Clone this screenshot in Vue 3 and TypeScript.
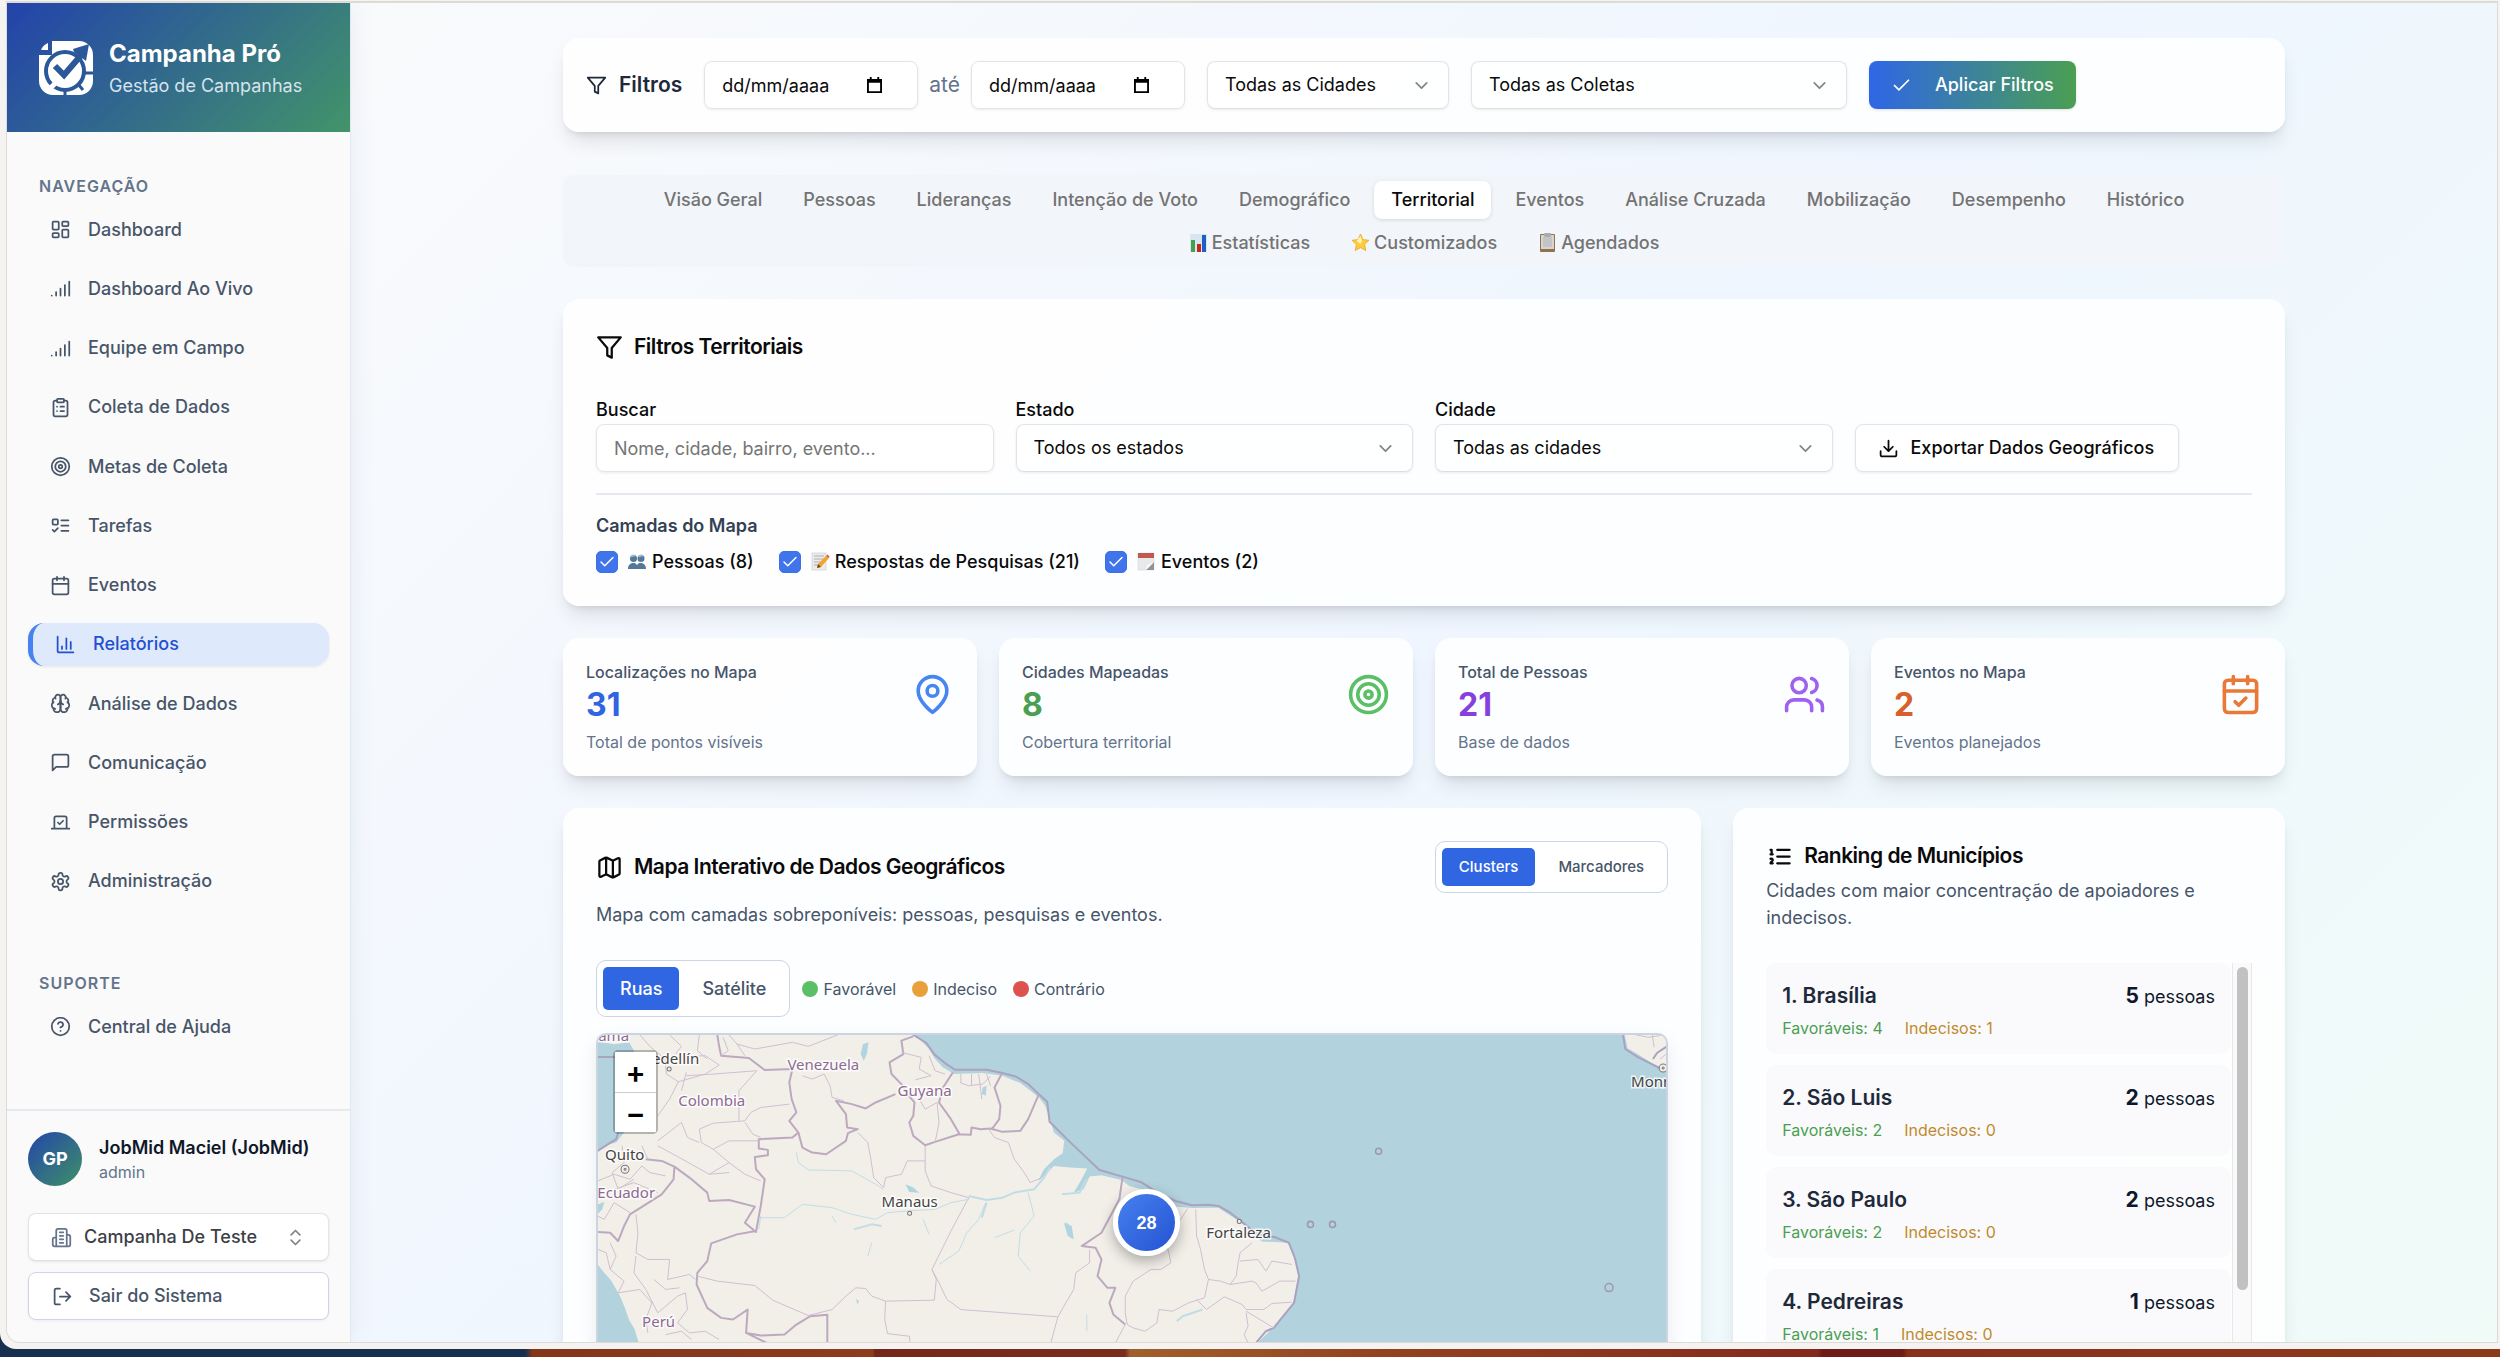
<script setup lang="ts">
import { ref } from 'vue'

const icons: Record<string, string> = {
  dashboard: '<rect x="3" y="3" width="7" height="9" rx="1"/><rect x="14" y="3" width="7" height="5" rx="1"/><rect x="14" y="12" width="7" height="9" rx="1"/><rect x="3" y="16" width="7" height="5" rx="1"/>',
  signal: '<path d="M2 20h.01M7 20v-4M12 20v-8M17 20V8M22 4v16"/>',
  clipboard: '<rect x="8" y="2" width="8" height="4" rx="1"/><path d="M16 4h2a2 2 0 0 1 2 2v14a2 2 0 0 1-2 2H6a2 2 0 0 1-2-2V6a2 2 0 0 1 2-2h2M12 11h4M12 16h4M8 11h.01M8 16h.01"/>',
  target: '<circle cx="12" cy="12" r="10"/><circle cx="12" cy="12" r="6"/><circle cx="12" cy="12" r="2"/>',
  todo: '<rect x="3" y="5" width="6" height="6" rx="1"/><path d="m3 17 2 2 4-4M13 6h8M13 12h8M13 18h8"/>',
  calendar: '<path d="M8 2v4M16 2v4M3 10h18"/><rect x="3" y="4" width="18" height="18" rx="2"/>',
  chart: '<path d="M3 3v16a2 2 0 0 0 2 2h16M18 17V9M13 17V5M8 17v-3"/>',
  brain: '<path d="M12 5a3 3 0 1 0-5.997.125 4 4 0 0 0-2.526 5.77 4 4 0 0 0 .556 6.588A4 4 0 1 0 12 18Z"/><path d="M12 5a3 3 0 1 1 5.997.125 4 4 0 0 1 2.526 5.77 4 4 0 0 1-.556 6.588A4 4 0 1 1 12 18Z"/><path d="M15 13a4.5 4.5 0 0 1-3-4 4.5 4.5 0 0 1-3 4M17.599 6.5a3 3 0 0 0 .399-1.375M6.003 5.125A3 3 0 0 0 6.401 6.5M3.477 10.896a4 4 0 0 1 .585-.396M19.938 10.5a4 4 0 0 1 .585.396M6 18a4 4 0 0 1-1.967-.516M19.967 17.484A4 4 0 0 1 18 18"/>',
  message: '<path d="M21 15a2 2 0 0 1-2 2H7l-4 4V5a2 2 0 0 1 2-2h14a2 2 0 0 1 2 2z"/>',
  vote: '<path d="m9 12 2 2 4-4M5 7c0-1.1.9-2 2-2h10a2 2 0 0 1 2 2v12H5V7ZM22 19H2"/>',
  settings: '<path d="M12.22 2h-.44a2 2 0 0 0-2 2v.18a2 2 0 0 1-1 1.73l-.43.25a2 2 0 0 1-2 0l-.15-.08a2 2 0 0 0-2.73.73l-.22.38a2 2 0 0 0 .73 2.73l.15.1a2 2 0 0 1 1 1.72v.51a2 2 0 0 1-1 1.74l-.15.09a2 2 0 0 0-.73 2.73l.22.38a2 2 0 0 0 2.73.73l.15-.08a2 2 0 0 1 2 0l.43.25a2 2 0 0 1 1 1.73V20a2 2 0 0 0 2 2h.44a2 2 0 0 0 2-2v-.18a2 2 0 0 1 1-1.73l.43-.25a2 2 0 0 1 2 0l.15.08a2 2 0 0 0 2.73-.73l.22-.39a2 2 0 0 0-.73-2.73l-.15-.08a2 2 0 0 1-1-1.74v-.5a2 2 0 0 1 1-1.74l.15-.09a2 2 0 0 0 .73-2.73l-.22-.38a2 2 0 0 0-2.73-.73l-.15.08a2 2 0 0 1-2 0l-.43-.25a2 2 0 0 1-1-1.73V4a2 2 0 0 0-2-2z"/><circle cx="12" cy="12" r="3"/>',
  help: '<circle cx="12" cy="12" r="10"/><path d="M9.09 9a3 3 0 0 1 5.83 1c0 2-3 3-3 3M12 17h.01"/>',
  building: '<path d="M6 22V4a2 2 0 0 1 2-2h8a2 2 0 0 1 2 2v18ZM6 12H4a2 2 0 0 0-2 2v6a2 2 0 0 0 2 2h2M18 9h2a2 2 0 0 1 2 2v9a2 2 0 0 1-2 2h-2M10 6h4M10 10h4M10 14h4M10 18h4"/>',
  updown: '<path d="m7 15 5 5 5-5M7 9l5-5 5 5"/>',
  logout: '<path d="M9 21H5a2 2 0 0 1-2-2V5a2 2 0 0 1 2-2h4M16 17l5-5-5-5M21 12H9"/>',
  filter: '<polygon points="22 3 2 3 10 12.46 10 19 14 21 14 12.46"/>',
  down: '<path d="m6 9 6 6 6-6"/>',
  check: '<path d="M20 6 9 17l-5-5"/>',
  download: '<path d="M21 15v4a2 2 0 0 1-2 2H5a2 2 0 0 1-2-2v-4M7 10l5 5 5-5M12 15V3"/>',
  pin: '<path d="M20 10c0 6-8 12-8 12s-8-6-8-12a8 8 0 0 1 16 0Z"/><circle cx="12" cy="10" r="3"/>',
  users: '<path d="M16 21v-2a4 4 0 0 0-4-4H6a4 4 0 0 0-4 4v2M22 21v-2a4 4 0 0 0-3-3.87M16 3.13a4 4 0 0 1 0 7.75"/><circle cx="9" cy="7" r="4"/>',
  calendarCheck: '<path d="M8 2v4M16 2v4M3 10h18M9 16l2 2 4-4"/><rect x="3" y="4" width="18" height="18" rx="2"/>',
  map: '<path d="M14.106 5.553a2 2 0 0 0 1.788 0l3.659-1.83A1 1 0 0 1 21 4.619v12.764a1 1 0 0 1-.553.894l-4.553 2.277a2 2 0 0 1-1.788 0l-4.212-2.106a2 2 0 0 0-1.788 0l-3.659 1.83A1 1 0 0 1 3 19.381V6.618a1 1 0 0 1 .553-.894l4.553-2.277a2 2 0 0 1 1.788 0zM15 5.764v15M9 3.236v15"/>',
  ordered: '<path d="M10 6h11M10 12h11M10 18h11M4 6h1v4M4 10h2M6 18H4c0-1 2-2 2-3s-1-1.5-2-1"/>',
}

const emojis: Record<string, string> = {
  bars: '<rect x="1" y="1" width="17" height="18" fill="#d9e6f2"/><rect x="2" y="7" width="4" height="12" fill="#3fa34d"/><rect x="8" y="11" width="4" height="8" fill="#c4271e"/><rect x="13" y="2" width="4" height="17" fill="#1f5fc4"/>',
  star: '<path d="M9.500 1l2.500 5.600 6 .700-4.400 4.200 1.200 6.100-5.300-3-5.300 3 1.200-6.100L1 7.300l6-.7z" fill="#fccb3e" stroke="#e9a820" stroke-width=".8"/><path d="M9.500 3L11 7.500 9.500 11 5.500 8z" fill="#fff3b5"/>',
  clip: '<rect x="2" y="1" width="15" height="18" rx="1" fill="#93714a"/><rect x="3" y="2" width="13" height="14" fill="#d5d5d5"/><rect x="5" y="4" width="9" height="10" fill="#c4c4c6"/><rect x="6" y="0" width="7" height="4" rx="1" fill="#a9adb2"/>',
  people: '<g fill="#54789a"><circle cx="5.500" cy="6.500" r="3.500"/><circle cx="13" cy="6.500" r="3.500"/><path d="M0 17c0-4 2-5 4-6h3l2 2 2-2h3c2 1 4 2 4 6z"/></g><path d="M3 5a3 3 0 0 1 4-1M11 5a3 3 0 0 1 4-1" stroke="#9fb9cf" fill="none" stroke-width="2"/>',
  memo: '<rect x="1" y="1" width="14" height="17" fill="#ececec" stroke="#c9c9c9" stroke-width=".6"/><path d="M3 4h10M3 7h10M3 10h7M3 13h5" stroke="#a8a8a8" stroke-width=".9"/><path d="M6 16l1-4 8-8 3 2-8 9z" fill="#f1a52c"/><path d="M15 4l3 2 .5-1.500-2-2z" fill="#d9534b"/><path d="M6 16l1-4 3 3z" fill="#6b4b2b"/>',
  agenda: '<rect x="1" y="1" width="16" height="17" fill="#e9e9e9" stroke="#d2d2d2" stroke-width=".5"/><rect x="1" y="1" width="16" height="5" fill="#c4584f"/><path d="M17 10v8H9z" fill="#8f9499"/><path d="M9 18l1-5 7-3z" fill="#fafafa"/>',
}

const nav = [
  ['dashboard', 'Dashboard'],
  ['signal', 'Dashboard Ao Vivo'],
  ['signal', 'Equipe em Campo'],
  ['clipboard', 'Coleta de Dados'],
  ['target', 'Metas de Coleta'],
  ['todo', 'Tarefas'],
  ['calendar', 'Eventos'],
  ['chart', 'Relatórios'],
  ['brain', 'Análise de Dados'],
  ['message', 'Comunicação'],
  ['vote', 'Permissões'],
  ['settings', 'Administração'],
]

const tabs: { label: string; emoji?: string }[] = [
  { label: 'Visão Geral' },
  { label: 'Pessoas' },
  { label: 'Lideranças' },
  { label: 'Intenção de Voto' },
  { label: 'Demográfico' },
  { label: 'Territorial' },
  { label: 'Eventos' },
  { label: 'Análise Cruzada' },
  { label: 'Mobilização' },
  { label: 'Desempenho' },
  { label: 'Histórico' },
  { label: 'Estatísticas', emoji: 'bars' },
  { label: 'Customizados', emoji: 'star' },
  { label: 'Agendados', emoji: 'clip' },
]
const activeTab = ref('Territorial')

const layers = ref([
  { emoji: 'people', label: 'Pessoas (8)', on: true },
  { emoji: 'memo', label: 'Respostas de Pesquisas (21)', on: true },
  { emoji: 'agenda', label: 'Eventos (2)', on: true },
])

const stats = [
  { label: 'Localizações no Mapa', value: 31, note: 'Total de pontos visíveis', icon: 'pin', tone: 'blue' },
  { label: 'Cidades Mapeadas', value: 8, note: 'Cobertura territorial', icon: 'target', tone: 'green' },
  { label: 'Total de Pessoas', value: 21, note: 'Base de dados', icon: 'users', tone: 'purple' },
  { label: 'Eventos no Mapa', value: 2, note: 'Eventos planejados', icon: 'calendarCheck', tone: 'orange' },
]

const ranking = [
  { city: 'Brasília', total: 5, yes: 4, maybe: 1 },
  { city: 'São Luis', total: 2, yes: 2, maybe: 0 },
  { city: 'São Paulo', total: 2, yes: 2, maybe: 0 },
  { city: 'Pedreiras', total: 1, yes: 1, maybe: 0 },
]

const mapMode = ref('Clusters')
const baseLayer = ref('Ruas')
</script>

<template>
  <div class="desktop">
    <div class="window">
      <div class="page">
        <aside class="sidebar">
          <header class="brand">
            <svg class="logo" viewBox="0 0 54 54" aria-hidden="true">
              <path d="M13 0H40A14 14 0 0 1 54 14V40A14 14 0 0 1 40 54H14A14 14 0 0 1 0 40V14H13Z" fill="#fff" />
              <path d="M2 9Q4 4 9 2V9Z" fill="#fff" />
              <g fill="none" stroke="#2a5899">
                <circle cx="26" cy="30" r="19" stroke-width="4" />
                <path d="M44 32h10M26 48v6M39 43l5 6" stroke-width="3" />
                <path d="M16 25l9 9 19-22" stroke-width="6" />
              </g>
              <path d="M8 47l6-6 4 3-6 6z" fill="#fff" />
              <path d="M34 8l16-5-3 17-4-3-8-6z" fill="#2a5899" />
            </svg>
            <div>
              <h1>Campanha Pró</h1>
              <p>Gestão de Campanhas</p>
            </div>
          </header>

          <nav class="nav">
            <h2>NAVEGAÇÃO</h2>
            <ul class="primary">
              <li v-for="[icon, label] in nav" :key="label">
                <a href="#" :class="{ active: label === 'Relatórios' }">
                  <svg class="icon i21" viewBox="0 0 24 24" aria-hidden="true" v-html="icons[icon]" />
                  {{ label }}
                </a>
              </li>
            </ul>
            <h2 class="support">SUPORTE</h2>
            <ul>
              <li>
                <a href="#">
                  <svg class="icon i21" viewBox="0 0 24 24" aria-hidden="true" v-html="icons.help" />
                  Central de Ajuda
                </a>
              </li>
            </ul>
          </nav>

          <footer class="account">
            <div class="user">
              <span class="avatar">GP</span>
              <div>
                <strong>JobMid Maciel (JobMid)</strong>
                <small>admin</small>
              </div>
            </div>
            <div class="picker campaign">
              <svg class="icon i21 lead" viewBox="0 0 24 24" aria-hidden="true" v-html="icons.building" />
              <select aria-label="Campanha"><option>Campanha De Teste</option></select>
              <svg class="icon i21 caret" viewBox="0 0 24 24" aria-hidden="true" v-html="icons.updown" />
            </div>
            <button class="leave" type="button">
              <svg class="icon i21" viewBox="0 0 24 24" aria-hidden="true" v-html="icons.logout" />
              Sair do Sistema
            </button>
          </footer>
        </aside>

        <main class="main">
          <div class="content">
            <section class="card filters">
              <h2>
                <svg class="icon i21" viewBox="0 0 24 24" aria-hidden="true" v-html="icons.filter" />
                Filtros
              </h2>
              <div class="dates">
                <div class="date">
                  <input type="text" placeholder="dd/mm/aaaa" aria-label="Data inicial" />
                  <svg viewBox="0 0 16 18" aria-hidden="true"><path d="M1 3h14v13H1z" fill="none" stroke="#000" stroke-width="2" /><path d="M1 2h14v4H1zM3 0h2v3H3zM11 0h2v3h-2z" /></svg>
                </div>
                <span>até</span>
                <div class="date">
                  <input type="text" placeholder="dd/mm/aaaa" aria-label="Data final" />
                  <svg viewBox="0 0 16 18" aria-hidden="true"><path d="M1 3h14v13H1z" fill="none" stroke="#000" stroke-width="2" /><path d="M1 2h14v4H1zM3 0h2v3H3zM11 0h2v3h-2z" /></svg>
                </div>
              </div>
              <div class="picker city">
                <select aria-label="Cidades"><option>Todas as Cidades</option></select>
                <svg class="icon i21 caret" viewBox="0 0 24 24" aria-hidden="true" v-html="icons.down" />
              </div>
              <div class="picker survey">
                <select aria-label="Coletas"><option>Todas as Coletas</option></select>
                <svg class="icon i21 caret" viewBox="0 0 24 24" aria-hidden="true" v-html="icons.down" />
              </div>
              <button class="apply" type="button">
                <svg class="icon i21" viewBox="0 0 24 24" aria-hidden="true" v-html="icons.check" />
                Aplicar Filtros
              </button>
            </section>

            <div class="tabs" role="tablist">
              <button
                v-for="tab in tabs"
                :key="tab.label"
                type="button"
                role="tab"
                :aria-selected="activeTab === tab.label"
                :class="{ active: activeTab === tab.label }"
                @click="activeTab = tab.label"
              >
                <svg v-if="tab.emoji" class="emoji" viewBox="0 0 19 20" aria-hidden="true" v-html="emojis[tab.emoji]" />
                {{ tab.label }}
              </button>
            </div>

            <section class="card territorial">
              <h2 class="title">
                <svg class="icon i27" viewBox="0 0 24 24" aria-hidden="true" v-html="icons.filter" />
                Filtros Territoriais
              </h2>
              <div class="fields">
                <div class="field">
                  <label for="busca">Buscar</label>
                  <input id="busca" type="text" placeholder="Nome, cidade, bairro, evento..." />
                </div>
                <div class="field">
                  <label for="estado">Estado</label>
                  <div class="picker">
                    <select id="estado"><option>Todos os estados</option></select>
                    <svg class="icon i21 caret" viewBox="0 0 24 24" aria-hidden="true" v-html="icons.down" />
                  </div>
                </div>
                <div class="field">
                  <label for="cidade">Cidade</label>
                  <div class="picker">
                    <select id="cidade"><option>Todas as cidades</option></select>
                    <svg class="icon i21 caret" viewBox="0 0 24 24" aria-hidden="true" v-html="icons.down" />
                  </div>
                </div>
                <button class="export" type="button">
                  <svg class="icon i21" viewBox="0 0 24 24" aria-hidden="true" v-html="icons.download" />
                  Exportar Dados Geográficos
                </button>
              </div>
              <div class="layers">
                <h3>Camadas do Mapa</h3>
                <div class="checks">
                  <label v-for="layer in layers" :key="layer.label">
                    <span class="box">
                      <input v-model="layer.on" type="checkbox" />
                      <svg class="icon" viewBox="0 0 24 24" aria-hidden="true" v-html="icons.check" />
                    </span>
                    <svg class="emoji" viewBox="0 0 19 20" aria-hidden="true" v-html="emojis[layer.emoji]" />
                    {{ layer.label }}
                  </label>
                </div>
              </div>
            </section>

            <section class="stats">
              <article v-for="stat in stats" :key="stat.label" class="card stat" :class="stat.tone">
                <div class="stat-top">
                  <div>
                    <h3>{{ stat.label }}</h3>
                    <strong>{{ stat.value }}</strong>
                  </div>
                  <svg class="icon i43" viewBox="0 0 24 24" aria-hidden="true" v-html="icons[stat.icon]" />
                </div>
                <p>{{ stat.note }}</p>
              </article>
            </section>

            <div class="columns">
              <section class="card map-card">
                <div class="map-head">
                  <h2 class="title">
                    <svg class="icon i27" viewBox="0 0 24 24" aria-hidden="true" v-html="icons.map" />
                    Mapa Interativo de Dados Geográficos
                  </h2>
                  <div class="toggle small">
                    <button v-for="m in ['Clusters', 'Marcadores']" :key="m" type="button" :class="{ active: mapMode === m }" @click="mapMode = m">{{ m }}</button>
                  </div>
                </div>
                <p class="lead-text">Mapa com camadas sobreponíveis: pessoas, pesquisas e eventos.</p>
                <div class="map-tools">
                  <div class="toggle">
                    <button v-for="b in ['Ruas', 'Satélite']" :key="b" type="button" :class="{ active: baseLayer === b }" @click="baseLayer = b">{{ b }}</button>
                  </div>
                  <ul class="legend">
                    <li class="yes">Favorável</li>
                    <li class="maybe">Indeciso</li>
                    <li class="no">Contrário</li>
                  </ul>
                </div>
                <div class="map">
                  <svg class="chart" viewBox="0 0 1066 600" preserveAspectRatio="xMinYMin slice" role="img" aria-label="Mapa da América do Sul">
                    <rect width="1066" height="600" fill="#b2d2dd" />
                    <g transform="translate(-59 -76) scale(.3954 .3333)" fill="none" stroke-linejoin="round">
                      <path fill="#f2efe9" d="M140 225V246L190 256 228 250 240 275 250 300V480L215 520 195 550 165 560 148 580V735L165 728 160 750 148 765V915L165 940 182 962 205 1010 216 1042 228 1082 242 1110 252 1150 300 1900H1600L1813 1150 1850 1108 1872 1078 1904 1030 1916 950 1908 900 1890 850 1855 848 1825 846 1800 820 1770 788 1715 745 1650 746 1610 742 1560 712 1520 690 1490 680 1470 662 1420 648 1390 652 1375 690 1350 700 1370 660 1384 628 1340 625 1300 620 1275 650 1260 665 1275 630 1300 600 1322 582 1326 545 1300 520 1290 480 1278 440 1262 415 1235 390 1215 372 1170 350 1120 342 1048 345 1020 325 1000 300 985 270 950 228Z" />
                      <path fill="#f2efe9" d="M2740 225L2748 268 2780 290 2809 312 2850 335V225Z" />
                      <g stroke="#a9a3c0" stroke-width="2">
                        <path vector-effect="non-scaling-stroke" d="M942 225L978 252 998 286 1025 312 1050 332 1130 332 1170 342 1205 353 1235 375 1260 403 1283 428 1289 488 1340 548 1415 632 1473 652 1519 668 1555 695 1607 725 1648 738 1690 736 1715 740 1745 760 1772 785 1813 825 1840 834 1855 832 1893 850 1908 895 1919 950 1906 1030 1875 1075 1855 1105 1835 1115 1810 1150" />
                        <path vector-effect="non-scaling-stroke" d="M148 575L175 555 195 540 200 520M148 294H195M2736 225L2742 270 2775 295 2809 315 2845 338M2850 260L2822 282 2812 300" />
                      </g>
                      <g stroke="#bda9bf" stroke-width="2">
                        <path vector-effect="non-scaling-stroke" d="M450 225L455 262 460 290 530 297 570 333 640 330 632 370 638 420 650 460 632 485 655 520 665 565 690 580 725 585 775 545 780 522 805 510 778 505 775 465 750 425 790 435 825 448 850 430 900 405" />
                        <path vector-effect="non-scaling-stroke" d="M945 232L915 245 920 285 885 310 890 345 915 375 930 405 948 430 945 470 935 490 945 530 975 558 1000 548 1060 525 1090 527 1092 505 1115 510 1140 508 1170 518 1215 515 1235 480 1262 405M1045 340L1020 385 1010 430 1040 480 1062 525M1168 345L1150 385 1165 440 1162 480 1142 512" />
                        <path vector-effect="non-scaling-stroke" d="M655 520L640 535 555 540 555 568 578 572 578 588 545 593 548 630 570 660 560 740 548 818 520 790 545 742 480 722 430 725 425 700 380 655 342 622 310 605 270 600M342 622L340 660 310 705 270 735 230 765 215 800 200 845 180 820 148 818" />
                        <path vector-effect="non-scaling-stroke" d="M548 815L500 825 435 852 425 905 400 940 398 975 425 1045 460 1075 490 1080 527 1050 523 1120 560 1128 620 1125 650 1095 685 1070 728 1066 728 1150M523 1120L575 1150" />
                        <path vector-effect="non-scaling-stroke" d="M1473 655L1465 720 1420 820 1370 860 1405 865 1420 900 1410 950 1435 985 1455 985 1440 1030 1450 1065 1480 1095" />
                      </g>
                      <g stroke="#cfbfd1" stroke-width="1">
                        <path vector-effect="non-scaling-stroke" d="M255 228L280 262 318 300 322 345 352 368 330 420 300 470M352 368L420 345 455 318 420 290 375 292M405 228L400 275 425 300M330 228L360 262 345 285M480 228L500 255 545 270 640 250 680 262 760 225M465 235L478 275 460 290M500 255L520 290M360 395L372 340M372 350L440 345 550 335 505 395 505 485M300 545L360 490 375 535 405 550M405 510L440 492 520 485 535 460 560 445 632 435M405 510L410 550 440 570 480 545 555 545M520 490L540 525 560 535M300 560L350 592 430 645 480 610 440 570M480 610L520 645 560 665M430 645L480 640M665 350L690 360 720 345 735 380 740 415 770 425M915 280L965 295 960 330 990 350 950 362M960 420L975 450 1005 430 1010 490 1000 550M1065 345V372L1085 380 1120 375 1140 352M1092 345V380M1110 345L1118 420M1130 345L1140 380M985 290L1000 335 1025 345" />
                        <path vector-effect="non-scaling-stroke" d="M805 520L830 550 838 600 845 655 870 685 875 655 915 645 930 605 975 605M975 560V635L990 680 1040 700 1085 715 1040 815 992 930 1010 970 1030 1020 1065 1050 1310 1072M1135 510L1150 535 1185 550 1200 600 1225 640 1240 670 1270 655M992 930L1003 960 998 1022 875 1025 873 1080 880 1122 935 1130 937 1150M400 950L450 965 545 978 590 1022 680 1068 740 1050 775 1010 800 985 825 987 840 1010 875 1025M1310 1072L1330 1030 1350 990 1355 940 1390 910 1390 870M1310 1072L1292 1150" />
                        <path vector-effect="non-scaling-stroke" d="M148 665L190 645 230 660 260 620 280 640 320 650M190 690L240 670 300 700M230 760L190 730 165 780 148 770M245 765L250 820 245 880 275 900 330 900 325 960 380 945 395 960M180 850L195 890 180 930 215 965 200 1000 255 990 285 1030 270 1080 275 1120M148 870L170 880 180 930M245 890L240 940 270 990 300 1060 350 1010 370 1000 375 1050 350 1090 380 1120 420 1115 455 1140M320 1125L360 1115 385 1140M240 660L200 690 185 640 215 610 210 560M260 560L275 600M290 960L320 990 355 985" />
                        <path vector-effect="non-scaling-stroke" d="M1637 748L1620 780 1595 790 1575 820 1590 880 1595 910 1570 930 1545 930 1500 965 1480 1010 1480 1060 1485 1095 1500 1105 1530 1115 1560 1090 1565 1050 1600 1055 1640 1030 1680 1015 1690 960 1680 930 1670 870 1660 830 1658 750M1455 1150L1480 1095M1690 960L1720 965 1745 975 1760 950 1765 910 1770 880 1800 850M1770 905L1815 900 1835 935 1850 905 1900 915M1745 975L1800 965 1810 970 1825 995 1870 965 1910 965M1660 1020L1685 1050 1730 1012 1775 1035 1785 1050 1830 1050 1850 1032 1900 1028M1785 1060L1790 1100 1780 1125 1790 1150M1785 1055L1855 1105M2760 225L2800 235 2840 228M2810 225L2815 265M2830 300L2850 280" />
                      </g>
                      <g stroke="#c0dde5" stroke-width="1">
                        <path vector-effect="non-scaling-stroke" d="M650 580L655 610 680 632 790 635 850 675 870 690M560 775L620 775 665 735 740 745 790 765 850 780 880 760 930 755 1000 750 1040 730 1085 720M1010 915L1060 875 1080 820 1110 780 1128 730M1235 700L1250 770 1215 820 1210 890 1240 935M1150 835L1200 812M740 770L750 790M970 780L985 825M840 850L830 890M560 770L555 810M1383 1065V1115" />
                        <path vector-effect="non-scaling-stroke" stroke-width="2" d="M1085 710L1130 722 1170 715 1200 700 1250 690 1275 655 1290 625M1320 705L1365 700 1382 660M1610 1085L1625 1070 1675 1050M795 810L840 795 865 800M1130 730L1118 775M1332 790L1345 835" />
                      </g>
                      <path fill="#b0d5e1" d="M818 255L832 250 828 285 820 305 812 285ZM925 675L945 685 960 700 935 698ZM1120 385L1130 380 1128 410 1118 405ZM1325 790L1345 800 1350 840 1335 830ZM800 1018L808 1025 804 1034Z" />
                    </g>
                    <g class="spots">
                      <circle cx="779" cy="116" r="3" /><circle cx="711" cy="189" r="3" /><circle cx="733" cy="189" r="3" /><circle cx="1009" cy="252" r="4" />
                    </g>
                    <g class="towns">
                      <circle cx="71" cy="34" r="2" /><circle cx="311" cy="178" r="2" /><circle cx="640" cy="186" r="2" />
                      <circle cx="27" cy="134" r="4" /><circle cx="27" cy="134" r="1" /><circle cx="1063" cy="33" r="4" /><circle cx="1063" cy="33" r="1" />
                    </g>
                    <g class="countries">
                      <text x="31" y="6" text-anchor="end">Panamá</text>
                      <text x="189" y="35">Venezuela</text>
                      <text x="80" y="71">Colombia</text>
                      <text x="299" y="61">Guyana</text>
                      <text x="57" y="163" text-anchor="end">Ecuador</text>
                      <text x="44" y="291">Perú</text>
                    </g>
                    <g class="cities">
                      <text x="101" y="29" text-anchor="end">Medellín</text>
                      <text x="7" y="125">Quito</text>
                      <text x="283" y="172">Manaus</text>
                      <text x="607" y="203">Fortaleza</text>
                      <text x="1031" y="52">Monrovia</text>
                    </g>
                  </svg>
                  <div class="zoom">
                    <button type="button" aria-label="Aproximar">+</button>
                    <button type="button" aria-label="Afastar">−</button>
                  </div>
                  <button class="cluster" type="button">28</button>
                </div>
              </section>

              <section class="card ranking">
                <h2 class="title">
                  <svg class="icon i27" viewBox="0 0 24 24" aria-hidden="true" v-html="icons.ordered" />
                  Ranking de Municípios
                </h2>
                <p class="lead-text">Cidades com maior concentração de apoiadores e indecisos.</p>
                <div class="scroller">
                  <ol>
                    <li v-for="(row, i) in ranking" :key="row.city">
                      <div class="row">
                        <h3>{{ i + 1 }}. {{ row.city }}</h3>
                        <span class="people"><b>{{ row.total }}</b> pessoas</span>
                      </div>
                      <div class="votes">
                        <span class="yes">Favoráveis: {{ row.yes }}</span>
                        <span class="maybe">Indecisos: {{ row.maybe }}</span>
                      </div>
                    </li>
                  </ol>
                  <div class="track" aria-hidden="true"><div class="thumb" /></div>
                </div>
              </section>
            </div>
          </div>
        </main>
      </div>
    </div>
  </div>
</template>

<style>
body {
  margin: 0;
}
</style>

<style scoped>
* {
  box-sizing: border-box;
}
h1, h2, h3, p, ul, ol {
  margin: 0;
  padding: 0;
  list-style: none;
}
button, input, select {
  font: inherit;
  color: inherit;
  margin: 0;
}
button {
  cursor: pointer;
  border: 0;
  background: none;
  padding: 0;
}
.desktop {
  height: 100vh;
  display: flex;
  padding-bottom: 8px;
  background: linear-gradient(90deg, #17304f 0 21%, #84361a 21.3%, #8d3c1c 34.9%, #74281b 35%, #7a2d1b 45%, #a0602b 45.2%, #93431f 55%, #84291d 72.7%, #6e1c15 72.9% 76.1%, #89301d 76.3%, #8b3b1a);
  font-family: Inter, "Liberation Sans", sans-serif;
  font-size: 18px;
  line-height: 26px;
  color: #0a0a0a;
}
.window {
  flex: 1;
  min-width: 0;
  display: flex;
  padding: 1px 2px 6px 6px;
  background: #f4f3f1;
  border-radius: 0 0 0 16px;
}
.page {
  flex: 1;
  min-width: 0;
  display: flex;
  border: 1px solid #dcdcd5;
  border-top-width: 2px;
  border-radius: 0 0 0 14px;
  overflow: hidden;
}
.icon {
  flex: none;
  fill: none;
  stroke: currentColor;
  stroke-width: 2;
  stroke-linecap: round;
  stroke-linejoin: round;
}
.i21 {
  width: 21px;
  height: 21px;
}
.i27 {
  width: 27px;
  height: 27px;
}
.i43 {
  width: 43px;
  height: 43px;
}
.emoji {
  flex: none;
  width: 19px;
  height: 20px;
}

/* Sidebar */
.sidebar {
  position: relative;
  z-index: 1;
  flex: none;
  width: 344px;
  display: flex;
  flex-direction: column;
  background: #fafafa;
  border-right: 1px solid #e2e8f0;
  box-shadow: 0 0 24px rgba(30, 60, 120, 0.08);
}
.brand {
  flex: none;
  height: 129px;
  padding: 0 32px;
  display: flex;
  align-items: center;
  gap: 16px;
  color: #fff;
  background: linear-gradient(135deg, #2343ab, #42946a);
}
.logo {
  width: 54px;
  height: 54px;
}
.brand h1 {
  font-size: 24px;
  line-height: 36px;
  font-weight: 700;
}
.brand p {
  line-height: 28px;
  color: #d7e3ee;
}
.nav {
  flex: 1;
  min-height: 0;
  overflow: hidden;
  padding: 42px 21px 0;
}
.nav h2 {
  padding-left: 11px;
  margin-bottom: 10px;
  font-size: 16px;
  line-height: 24px;
  font-weight: 600;
  letter-spacing: 1px;
  color: #64748b;
}
.nav .support {
  margin-top: 68px;
}
.nav ul {
  display: flex;
  flex-direction: column;
}
.nav .primary {
  min-height: 695px;
  justify-content: space-between;
}
.nav a {
  display: flex;
  align-items: center;
  gap: 17px;
  height: 43px;
  padding: 0 22px;
  border-radius: 16px;
  font-weight: 500;
  color: #475569;
  text-decoration: none;
}
.nav a.active {
  border-left: 5px solid #4682f0;
  background: #dee9fc;
  color: #2450d0;
  box-shadow: 0 1px 3px rgba(0, 0, 0, 0.08);
}
.account {
  flex: none;
  padding: 21px 21px 22px;
  border-top: 2px solid #e5eaf1;
}
.user {
  display: flex;
  align-items: center;
  gap: 17px;
  margin-bottom: 27px;
}
.avatar {
  width: 54px;
  height: 54px;
  border-radius: 50%;
  display: grid;
  place-items: center;
  font-weight: 700;
  color: #fff;
  background: linear-gradient(135deg, #2346a8, #3f9068);
}
.user strong {
  display: block;
  font-weight: 600;
  color: #0f172a;
  white-space: nowrap;
}
.user small {
  display: block;
  font-size: 16px;
  line-height: 22px;
  color: #64748b;
}
.picker {
  display: grid;
  align-items: center;
}
.picker > * {
  grid-area: 1 / 1;
}
.picker select {
  width: 100%;
  height: 48px;
  padding: 0 42px 0 17px;
  appearance: none;
  border: 1px solid #e2e4e8;
  border-bottom-color: #dcdee2;
  border-radius: 8px;
  background: rgba(255, 255, 255, 0.6);
  box-shadow: 0 1px 3px rgba(0, 0, 0, 0.08);
}
.picker .caret {
  justify-self: end;
  margin-right: 17px;
  color: #858585;
  pointer-events: none;
}
.campaign {
  margin-bottom: 11px;
}
.campaign .lead {
  margin-left: 23px;
  color: #64748b;
  z-index: 1;
}
.campaign .caret {
  margin-right: 23px;
}
.campaign select {
  padding-left: 55px;
  background: #fff;
  font-weight: 500;
  color: #3c3f46;
}
.leave {
  width: 100%;
  height: 48px;
  padding: 0 23px;
  display: flex;
  align-items: center;
  gap: 16px;
  border: 1px solid #cbd5e6;
  border-radius: 8px;
  background: #fff;
  font-weight: 500;
  color: #475569;
  box-shadow: 0 1px 3px rgba(0, 0, 0, 0.06);
}

/* Main column */
.main {
  flex: 1;
  min-width: 0;
  overflow: hidden;
  padding: 35px 24px 0;
  background: linear-gradient(135deg, #f9fafc 0%, #eff6ff 50%, #f0fdf6 115%);
}
.content {
  max-width: 1722px;
  margin: 0 auto;
  display: flex;
  flex-direction: column;
  gap: 32px;
}
.card {
  border-radius: 16px;
  background: rgba(255, 255, 255, 0.86);
  box-shadow: 0 13px 20px -4px rgba(0, 0, 0, 0.1), 0 5px 8px -5px rgba(0, 0, 0, 0.14);
}
.filters {
  display: flex;
  align-items: center;
  gap: 22px;
  padding: 23px;
}
.filters h2 {
  display: flex;
  align-items: center;
  gap: 12px;
  font-size: 21px;
  font-weight: 600;
  color: #1e293b;
}
.dates {
  display: flex;
  align-items: center;
  gap: 11px;
  font-size: 21px;
  color: #64748b;
}
.date {
  display: grid;
  align-items: center;
  font-size: 18px;
}
.date > * {
  grid-area: 1 / 1;
}
.date svg {
  width: 15px;
  height: 17px;
  justify-self: end;
  margin-right: 36px;
}
.date input {
  width: 214px;
}
input[type='text'] {
  height: 48px;
  padding: 0 17px;
  border: 1px solid #e2e4e8;
  border-radius: 8px;
  background: rgba(255, 255, 255, 0.6);
  box-shadow: 0 1px 3px rgba(0, 0, 0, 0.08);
}
input::placeholder {
  color: #757575;
  opacity: 1;
}
.date input::placeholder {
  color: #0a0a0a;
}
.city {
  width: 242px;
}
.survey {
  width: 376px;
}
.apply {
  height: 48px;
  padding: 0 22px;
  display: flex;
  align-items: center;
  gap: 23px;
  border-radius: 8px;
  font-weight: 500;
  color: #fff;
  background: linear-gradient(90deg, #2f66e6, #4a9f52);
  box-shadow: 0 1px 3px rgba(0, 0, 0, 0.12);
}
.tabs {
  margin-top: 11px;
  padding: 6px 80px 5px;
  display: flex;
  flex-wrap: wrap;
  justify-content: center;
  gap: 5px 7px;
  border-radius: 10px;
  background: #f2f5fa;
}
.tabs button {
  height: 38px;
  padding: 0 17px;
  display: flex;
  align-items: center;
  gap: 4px;
  border-radius: 8px;
  font-weight: 500;
  color: #737373;
}
.tabs button.active {
  background: #fff;
  color: #0a0a0a;
  box-shadow: 0 1px 4px rgba(0, 0, 0, 0.12);
}
.title {
  display: flex;
  align-items: center;
  gap: 11px;
  font-size: 21px;
  line-height: 28px;
  font-weight: 600;
  letter-spacing: -0.5px;
}
.territorial {
  padding: 34px 33px 31px;
}
.fields {
  margin-top: 37px;
  padding-bottom: 21px;
  border-bottom: 2px solid #e4e8f0;
  display: grid;
  grid-template-columns: repeat(4, 1fr);
  gap: 22px;
  align-items: end;
}
.field {
  display: flex;
  flex-direction: column;
  gap: 2px;
}
.field label {
  line-height: 24px;
  font-weight: 500;
}
.export {
  justify-self: start;
  height: 48px;
  padding: 0 24px 0 22px;
  display: flex;
  align-items: center;
  gap: 12px;
  border: 1px solid #e2e4e8;
  border-radius: 8px;
  background: #fff;
  font-weight: 500;
  box-shadow: 0 1px 3px rgba(0, 0, 0, 0.08);
}
.layers {
  padding-top: 18px;
}
.layers h3 {
  font-size: 18px;
  font-weight: 600;
  color: #334155;
}
.checks {
  margin-top: 9px;
  display: flex;
  gap: 25px;
}
.checks label {
  display: flex;
  align-items: center;
  gap: 5px;
  line-height: 27px;
  font-weight: 500;
}
.box {
  display: grid;
  margin-right: 5px;
}
.box > * {
  grid-area: 1 / 1;
  width: 22px;
  height: 22px;
  margin: 0;
}
.box input {
  appearance: none;
  border: 1px solid #3b70e8;
  border-radius: 5px;
}
.box input:checked {
  background: #3f74ea;
}
.box svg {
  padding: 2px;
  color: #fff;
  pointer-events: none;
}
.stats {
  display: grid;
  grid-template-columns: repeat(4, 1fr);
  gap: 22px;
}
.stat {
  padding: 23px;
}
.stat-top {
  display: flex;
  justify-content: space-between;
  align-items: center;
}
.stat h3 {
  font-size: 16px;
  line-height: 22px;
  font-weight: 500;
  color: #475569;
}
.stat strong {
  display: block;
  font-size: 32px;
  line-height: 44px;
  font-weight: 700;
}
.stat p {
  margin-top: 4px;
  font-size: 16px;
  line-height: 22px;
  color: #64748b;
}
.blue strong { color: #3064e0; }
.blue .icon { color: #4685f2; }
.green strong { color: #4a9f52; }
.green .icon { color: #5bbf66; }
.purple strong { color: #873fdd; }
.purple .icon { color: #9f62f0; }
.orange strong { color: #d9602a; }
.orange .icon { color: #e87936; }

.columns {
  display: grid;
  grid-template-columns: 33fr 16fr;
  gap: 32px;
}
.map-card {
  padding: 33px;
}
.map-head {
  display: flex;
  justify-content: space-between;
  align-items: center;
}
.toggle {
  display: flex;
  gap: 6px;
  padding: 6px;
  border: 1px solid #cbd5e6;
  border-radius: 10px;
  background: #fff;
}
.toggle button {
  height: 43px;
  padding: 0 17px;
  border-radius: 5px;
  font-weight: 500;
  color: #475569;
}
.toggle.small button {
  height: 38px;
  font-size: 15px;
}
.toggle button.active {
  background: #3166e3;
  color: #fff;
}
.lead-text {
  line-height: 27px;
  color: #475569;
}
.map-card .lead-text {
  margin-top: 8px;
}
.map-tools {
  margin: 32px 0 16px;
  display: flex;
  align-items: center;
  gap: 12px;
}
.legend {
  display: flex;
  gap: 16px;
  font-size: 16px;
  color: #475569;
}
.legend li {
  display: flex;
  align-items: center;
  gap: 5px;
}
.legend li::before {
  content: '';
  width: 16px;
  height: 16px;
  border-radius: 50%;
  background: #5bbf66;
}
.legend .maybe::before { background: #e9a03b; }
.legend .no::before { background: #dd524c; }
.map {
  position: relative;
  height: 600px;
  border: 2px solid #cbd5e1;
  border-radius: 10px;
  overflow: hidden;
  box-shadow: 0 8px 20px rgba(0, 0, 0, 0.08);
}
.chart {
  display: block;
  width: 100%;
  height: 100%;
  font-family: "Noto Sans", sans-serif;
  font-size: 15px;
}
.chart text {
  stroke: rgba(255, 255, 255, 0.8);
  stroke-width: 3px;
  paint-order: stroke;
}
.countries { fill: #8c6a91; }
.cities { fill: #444; }
.spots {
  fill: none;
  stroke: #a095b4;
  stroke-width: 1.5;
}
.towns {
  fill: #f2efe9;
  stroke: #777;
}
.zoom {
  position: absolute;
  top: 15px;
  left: 15px;
  display: flex;
  flex-direction: column;
  border: 2px solid rgba(0, 0, 0, 0.25);
  border-radius: 5px;
}
.zoom button {
  width: 41px;
  height: 40px;
  background: #fff;
  font-size: 30px;
  line-height: 40px;
  font-weight: 600;
  color: #000;
}
.zoom button + button {
  border-top: 1px solid #ccc;
}
.cluster {
  position: absolute;
  top: 154px;
  left: 515px;
  width: 67px;
  height: 67px;
  border: 5px solid #fff;
  border-radius: 50%;
  background: linear-gradient(135deg, #4681ee, #2553d3);
  color: #fff;
  font-family: "Liberation Sans", sans-serif;
  font-weight: 700;
  box-shadow: 0 5px 14px rgba(0, 0, 0, 0.3);
}
.ranking {
  padding: 34px 33px;
}
.ranking .lead-text {
  margin-top: 7px;
}
.scroller {
  margin-top: 32px;
  height: 538px;
  display: flex;
}
.scroller ol {
  flex: 1;
  display: flex;
  flex-direction: column;
  gap: 11px;
}
.scroller li {
  flex: none;
  height: 91px;
  padding: 16px;
  border-radius: 10px;
  background: #fafafc;
}
.row {
  display: flex;
  justify-content: space-between;
  align-items: baseline;
  line-height: 33px;
  color: #1e293b;
}
.row h3 {
  font-size: 21px;
  font-weight: 600;
}
.people b {
  font-size: 21px;
  font-weight: 700;
}
.people {
  color: #0f172a;
}
.votes {
  display: flex;
  gap: 22px;
  font-size: 16px;
  line-height: 30px;
}
.votes .yes { color: #4a9f52; }
.votes .maybe { color: #c08a2c; }
.track {
  width: 20px;
  margin-left: 1px;
  padding: 4px;
  border: 1px solid #e8e8e8;
  border-width: 0 1px;
  background: #fafafa;
}
.thumb {
  width: 11px;
  height: 61%;
  border-radius: 6px;
  background: #c1c1c1;
}
</style>
